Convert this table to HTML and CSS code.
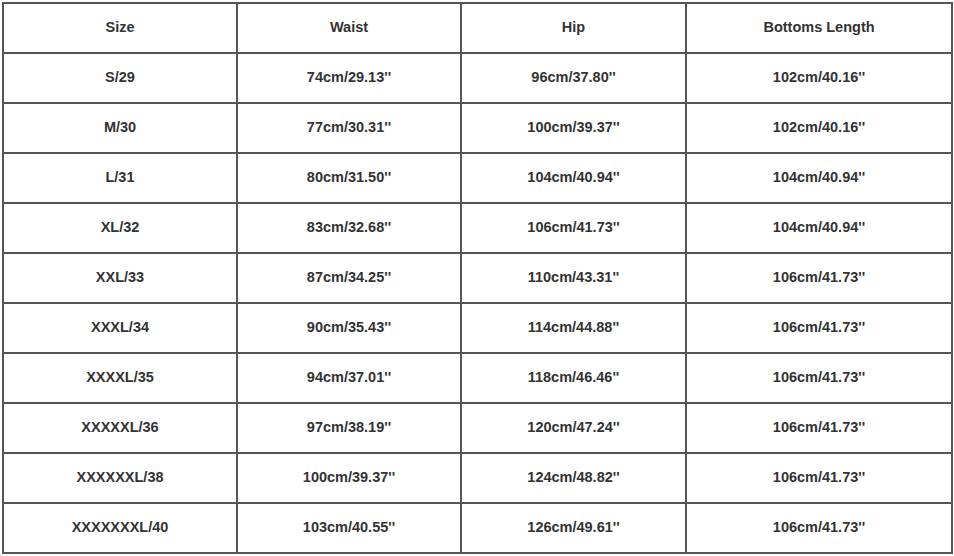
FILE: index.html
```html
<!DOCTYPE html>
<html>
<head>
<meta charset="utf-8">
<link rel="stylesheet" href="styles.css">
</head>
<body>
<div class="chart">
  <div class="cell">Size</div><div class="cell">Waist</div><div class="cell">Hip</div><div class="cell">Bottoms Length</div>
  <div class="cell">S/29</div><div class="cell">74cm/29.13''</div><div class="cell">96cm/37.80''</div><div class="cell">102cm/40.16''</div>
  <div class="cell">M/30</div><div class="cell">77cm/30.31''</div><div class="cell">100cm/39.37''</div><div class="cell">102cm/40.16''</div>
  <div class="cell">L/31</div><div class="cell">80cm/31.50''</div><div class="cell">104cm/40.94''</div><div class="cell">104cm/40.94''</div>
  <div class="cell">XL/32</div><div class="cell">83cm/32.68''</div><div class="cell">106cm/41.73''</div><div class="cell">104cm/40.94''</div>
  <div class="cell">XXL/33</div><div class="cell">87cm/34.25''</div><div class="cell">110cm/43.31''</div><div class="cell">106cm/41.73''</div>
  <div class="cell">XXXL/34</div><div class="cell">90cm/35.43''</div><div class="cell">114cm/44.88''</div><div class="cell">106cm/41.73''</div>
  <div class="cell">XXXXL/35</div><div class="cell">94cm/37.01''</div><div class="cell">118cm/46.46''</div><div class="cell">106cm/41.73''</div>
  <div class="cell">XXXXXL/36</div><div class="cell">97cm/38.19''</div><div class="cell">120cm/47.24''</div><div class="cell">106cm/41.73''</div>
  <div class="cell">XXXXXXL/38</div><div class="cell">100cm/39.37''</div><div class="cell">124cm/48.82''</div><div class="cell">106cm/41.73''</div>
  <div class="cell">XXXXXXXL/40</div><div class="cell">103cm/40.55''</div><div class="cell">126cm/49.61''</div><div class="cell">106cm/41.73''</div>
</div>
</body>
</html>
```

FILE: styles.css
```css
html, body {
  margin: 0;
  padding: 0;
  background: #ffffff;
}
.chart {
  margin: 2px 0 0 2px;
  display: grid;
  grid-template-columns: 234px 224px 225px 266px;
  grid-auto-rows: 50px;
  width: max-content;
  border-left: 2px solid #555555;
  border-top: 2px solid #555555;
  font-family: "Liberation Sans", Arial, sans-serif;
  font-weight: bold;
  font-size: 14.5px;
  color: #333333;
}
.cell {
  display: flex;
  align-items: center;
  justify-content: center;
  border-right: 2px solid #555555;
  border-bottom: 2px solid #555555;
  padding-bottom: 3px;
  box-sizing: border-box;
}
```
